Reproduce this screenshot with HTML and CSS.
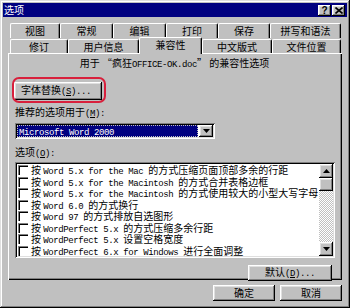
FILE: index.html
```html
<!DOCTYPE html>
<html lang="zh-Hans">
<head>
    <meta charset="UTF-8">
    <title>选项</title>
    <link rel="stylesheet" href="styles.css">
</head>
<body>
    <div class="window">
        <!-- 标题栏 -->
        <div class="titlebar">
            <span class="title">选项</span>
            <div class="title-btns">
                <span class="tbtn help">?</span>
                <span class="tbtn close">
                    <svg width="8" height="7" viewBox="0 0 8 7"><path d="M0.5 0.5 L7.5 6.5 M7.5 0.5 L0.5 6.5" stroke="#000" stroke-width="1.6"/></svg>
                </span>
            </div>
        </div>

        <div class="content">
            <!-- 选项卡 -->
            <div class="tabs">
                <div class="tab-row back">
                    <div class="tab">视图</div>
                    <div class="tab">常规</div>
                    <div class="tab">编辑</div>
                    <div class="tab">打印</div>
                    <div class="tab">保存</div>
                    <div class="tab">拼写和语法</div>
                </div>
                <div class="tab-row front">
                    <div class="tab">修订</div>
                    <div class="tab">用户信息</div>
                    <div class="tab active">兼容性</div>
                    <div class="tab">中文版式</div>
                    <div class="tab">文件位置</div>
                </div>
            </div>

            <!-- 兼容性面板 -->
            <div class="panel">
                <p class="heading">用于 “疯狂<span class="en">OFFICE-OK.doc</span>” 的兼容性选项</p>

                <div class="mark">
                    <button class="btn btn-font">字体替换<span class="en">(<u>S</u>)...</span></button>
                </div>

                <div class="label">推荐的选项用于<span class="en">(<u>M</u>):</span></div>
                <div class="combo field">
                    <span class="combo-value"><span class="en">Microsoft Word 2000</span></span>
                    <span class="btn drop">
                        <svg width="7" height="4" viewBox="0 0 7 4"><path d="M0 0 H7 L3.5 4 Z" fill="#000"/></svg>
                    </span>
                </div>

                <div class="label">选项<span class="en">(<u>O</u>):</span></div>
                <div class="listbox field">
                    <ul class="items">
                        <li><span class="check"></span>按 <span class="en">Word 5.x for the Mac </span>的方式压缩页面顶部多余的行距</li>
                        <li><span class="check"></span>按 <span class="en">Word 5.x for the Macintosh </span>的方式合并表格边框</li>
                        <li><span class="check"></span>按 <span class="en">Word 5.x for the Macintosh </span>的方式使用较大的小型大写字母</li>
                        <li><span class="check"></span>按 <span class="en">Word 6.0 </span>的方式换行</li>
                        <li><span class="check"></span>按 <span class="en">Word 97 </span>的方式排放自选图形</li>
                        <li><span class="check"></span>按 <span class="en">WordPerfect 5.x </span>的方式压缩多余行距</li>
                        <li><span class="check"></span>按 <span class="en">WordPerfect 5.x </span>设置空格宽度</li>
                        <li><span class="check"></span>按 <span class="en">WordPerfect 6.x for Windows </span>进行全面调整</li>
                    </ul>
                    <div class="scrollbar">
                        <span class="btn sbtn">
                            <svg width="7" height="4" viewBox="0 0 7 4"><path d="M0 4 H7 L3.5 0 Z" fill="#000"/></svg>
                        </span>
                        <span class="btn thumb"></span>
                        <span class="track"></span>
                        <span class="btn sbtn">
                            <svg width="7" height="4" viewBox="0 0 7 4"><path d="M0 0 H7 L3.5 4 Z" fill="#000"/></svg>
                        </span>
                    </div>
                </div>

                <div class="panel-foot">
                    <button class="btn btn-default">默认<span class="en">(<u>D</u>)...</span></button>
                </div>
            </div>

            <!-- 底部按钮 -->
            <div class="footer">
                <button class="btn btn-ok">确定</button>
                <button class="btn btn-ok">取消</button>
            </div>
        </div>
    </div>
</body>
</html>
```

FILE: styles.css
```css
/* 基本样式 */
* {
    box-sizing: border-box;
}

body {
    margin: 0;
    padding: 0;
    background-color: #c0c0c0;
    font-family: "Noto Sans CJK SC", sans-serif;
    font-size: 10px;
    line-height: 11px;
    color: #000;
}

.en {
    font-family: "Liberation Mono", monospace;
    font-size: 9px;
    letter-spacing: -0.4px;
}

/* 凸起与凹陷边框 */
.btn {
    background-color: #c0c0c0;
    border: none;
    padding: 0;
    margin: 0;
    font: inherit;
    color: #000;
    box-shadow: inset -1px -1px #000, inset 1px 1px #fff, inset -2px -2px #808080, inset 2px 2px #dfdfdf;
}

.field {
    background-color: #fff;
    box-shadow: inset 1px 1px #808080, inset -1px -1px #fff, inset 2px 2px #000, inset -2px -2px #dfdfdf;
}

/* 窗口 */
.window {
    width: 350px;
    height: 308px;
    padding: 3px;
    background-color: #c0c0c0;
    box-shadow: inset -1px -1px #000, inset 1px 1px #dfdfdf, inset -2px -2px #808080, inset 2px 2px #fff;
}

.titlebar {
    height: 14px;
    background-color: #000080;
    display: flex;
    justify-content: space-between;
    align-items: center;
    padding: 0 2px 0 1px;
}

.title {
    color: #fff;
    font-size: 10px;
    line-height: 12px;
}

.title-btns {
    display: flex;
    gap: 1px;
}

.tbtn {
    width: 13px;
    height: 11px;
    display: flex;
    align-items: center;
    justify-content: center;
    background-color: #c0c0c0;
    box-shadow: inset -1px -1px #000, inset 1px 1px #fff, inset -2px -2px #808080, inset 2px 2px #dfdfdf;
}

.tbtn.help {
    font-family: "Liberation Sans", sans-serif;
    font-weight: bold;
    font-size: 10px;
    line-height: 11px;
}

.content {
    padding: 5px 5px 0 5px;
}

/* 选项卡 */
.tabs {
    padding-left: 2px;
}

.tab-row {
    display: flex;
}

.tab-row.back {
    height: 15px;
}

.tab-row.front {
    height: 16px;
    position: relative;
    z-index: 2;
}

.tab {
    border-top: 1px solid #fff;
    border-left: 1px solid #fff;
    border-right: 1px solid #000;
    border-radius: 2px 2px 0 0;
    box-shadow: inset -1px 0 #808080;
    text-align: center;
    background-color: #c0c0c0;
}

.back .tab {
    margin-top: 1px;
    height: 15px;
    line-height: 13px;
}

.front .tab {
    margin-top: 2px;
    height: 14px;
    line-height: 13px;
}

.front .tab.active {
    margin-top: 0;
    height: 17px;
    line-height: 14px;
}

.back .tab:nth-child(1) { width: 50px; }
.back .tab:nth-child(2) { width: 53px; }
.back .tab:nth-child(3) { width: 53px; }
.back .tab:nth-child(4) { width: 52px; }
.back .tab:nth-child(5) { width: 52px; }
.back .tab:nth-child(6) { width: 71px; }

.front .tab:nth-child(1) { width: 58px; }
.front .tab:nth-child(2) { width: 71px; }
.front .tab:nth-child(3) { width: 63px; }
.front .tab:nth-child(4) { width: 70px; }
.front .tab:nth-child(5) { width: 69px; }

/* 面板 */
.panel {
    height: 227px;
    padding: 4px 8px 0 7px;
    display: flex;
    flex-direction: column;
    align-items: flex-start;
    box-shadow: inset 1px 1px #fff, inset -1px -1px #000, inset -2px -2px #808080;
}

.heading {
    margin: 0;
    align-self: stretch;
    text-align: center;
    line-height: 11px;
}

.mark {
    position: relative;
    margin-top: 11px;
    margin-left: -1px;
}

/* 红色标注框 */
.mark::after {
    content: "";
    position: absolute;
    top: -5px;
    left: -2px;
    right: -4px;
    bottom: -3px;
    border: 2px solid #d8203c;
    border-radius: 7px;
}

.btn-font {
    width: 88px;
    height: 18px;
    display: block;
    text-align: left;
    padding-left: 7px;
}

.label {
    margin-top: 6px;
    line-height: 11px;
}

.combo {
    margin-top: 3px;
    width: 200px;
    height: 16px;
    padding: 2px;
    display: flex;
    gap: 1px;
}

.combo-value {
    flex: 1;
    background-color: #000080;
    color: #fff;
    outline: 1px dotted #c0c0c0;
    outline-offset: -1px;
    line-height: 12px;
    padding-left: 2px;
}

.drop {
    width: 14px;
    height: 12px;
    display: flex;
    align-items: center;
    justify-content: center;
}

.combo + .label {
    margin-top: 7px;
}

.listbox {
    margin-top: 2px;
    width: 320px;
    height: 96px;
    padding: 2px;
    display: flex;
}

.items {
    list-style: none;
    margin: 0;
    padding: 0;
    flex: 1;
    overflow: hidden;
}

.items li {
    display: block;
    height: 11.5px;
    line-height: 11.5px;
    white-space: pre;
    padding-left: 1px;
}

.check {
    display: inline-block;
    width: 10px;
    height: 10px;
    margin-right: 3px;
    vertical-align: -1px;
    box-shadow: inset 1px 1px #808080, inset 2px 2px #000;
}

.scrollbar {
    width: 14px;
    flex: none;
    display: flex;
    flex-direction: column;
}

.sbtn {
    height: 14px;
    display: flex;
    align-items: center;
    justify-content: center;
}

.thumb {
    height: 13px;
}

.track {
    flex: 1;
    background: repeating-conic-gradient(#c0c0c0 0 25%, #fff 0 50%) 0 0 / 2px 2px;
}

.panel-foot {
    align-self: flex-end;
    margin-top: 7px;
    margin-right: 2px;
}

.btn-default {
    width: 84px;
    height: 16px;
    line-height: 14px;
}

/* 底部按钮 */
.footer {
    display: flex;
    justify-content: flex-end;
    gap: 5px;
    margin-top: 5px;
}

.btn-ok {
    width: 62px;
    height: 16px;
    line-height: 14px;
}
```
